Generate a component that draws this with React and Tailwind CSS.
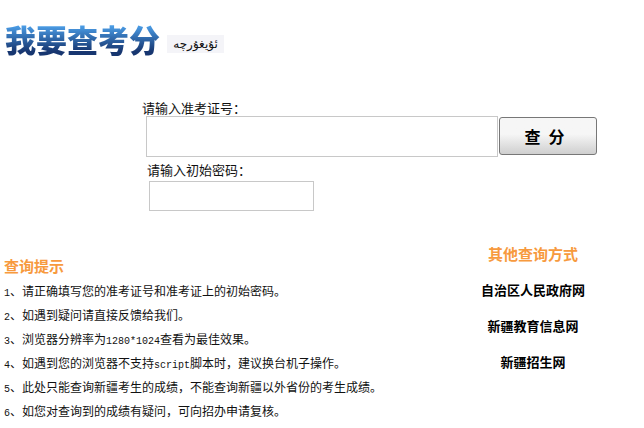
const CJK = "font-['Noto_Sans_CJK_SC','Liberation_Sans',sans-serif]";

const Latin = ({ children }) => (
  <span className="font-['Liberation_Mono',monospace] text-[10px] leading-none">{children}</span>
);

const TIPS = [
  <>请正确填写您的准考证号和准考证上的初始密码。</>,
  <>如遇到疑问请直接反馈给我们。</>,
  <>浏览器分辨率为<Latin>1280*1024</Latin>查看为最佳效果。</>,
  <>如遇到您的浏览器不支持<Latin>script</Latin>脚本时，建议换台机子操作。</>,
  <>此处只能查询新疆考生的成绩，不能查询新疆以外省份的考生成绩。</>,
  <>如您对查询到的成绩有疑问，可向招办申请复核。</>,
];

const LINKS = ["自治区人民政府网", "新疆教育信息网", "新疆招生网"];

export default function App() {
  return (
    <div className={`h-[428px] w-[644px] overflow-hidden bg-white text-[#111] ${CJK}`}>
      <div className="flex h-[58px] items-start pt-[21px] pl-[5px]">
        <h1 className="w-[162px] bg-gradient-to-b from-[#4a9be4] from-15% to-[#173670] to-85% bg-clip-text text-[31px] leading-[36px] font-black text-transparent">
          我要查考分
        </h1>
        <div dir="rtl" className="mt-[14px] flex h-[18px] w-[57px] items-center justify-center bg-[#f4f4f8] font-['DejaVu_Sans',sans-serif] text-[12px] leading-none text-[#111]">
          ئۇيغۇرچە
        </div>
      </div>

      <div className="mt-[41px] flex flex-col pl-[142px]">
        <label className="h-[17px] text-[13px] leading-[18px]">请输入准考证号：</label>
        <div className="flex items-start pl-1">
          <input className="h-[41px] w-[352px] border border-[#c8c8c8] bg-white" />
          <button className="mt-px ml-px h-[38px] w-[98px] rounded-[3px] border border-[#777] bg-gradient-to-b from-[#f6f6f6] from-45% to-[#cfcfcf] pl-[1px] text-[16px] font-bold tracking-[8px] text-black">
            查分
          </button>
        </div>
        <label className="mt-[4px] pl-[5px] text-[13px] leading-[18px]">请输入初始密码：</label>
        <input className="mt-[2px] ml-[7px] h-[30px] w-[165px] border border-[#c8c8c8] bg-white" />
      </div>

      <div className="mt-[33px] flex">
        <div className="w-[465px] pt-[12px] pl-1">
          <h2 className="text-[15px] leading-[20px] font-bold text-[#f79a3e]">查询提示</h2>
          <ol className="mt-[3px] text-[12px] leading-[24px]">
            {TIPS.map((tip, i) => (
              <li key={i} className="h-6 whitespace-nowrap">
                <Latin>{i + 1}</Latin>、{tip}
              </li>
            ))}
          </ol>
        </div>
        <div className="flex w-[136px] flex-col items-center">
          <h2 className="text-[15px] leading-[20px] font-bold text-[#f79a3e]">其他查询方式</h2>
          <ul className="mt-[16px] flex flex-col items-center gap-[16px]">
            {LINKS.map((link) => (
              <li key={link} className="text-[13px] leading-[20px] font-bold text-black">
                {link}
              </li>
            ))}
          </ul>
        </div>
      </div>
    </div>
  );
}
